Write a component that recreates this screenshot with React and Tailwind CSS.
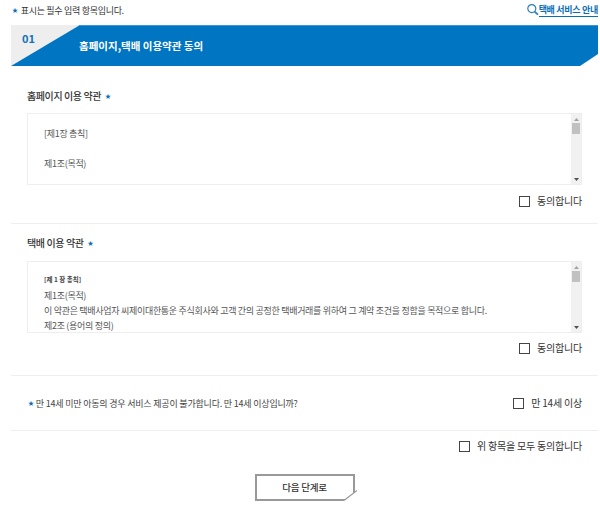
const FONT = "font-['Noto_Sans_CJK_KR','Noto_Sans',sans-serif]";

function Star() {
  return <span className="text-[#0b6fb5] text-[6px] leading-none">★</span>;
}

function Check({ label, className = "" }) {
  return (
    <div className={`flex h-4 items-center justify-end ${className}`}>
      <span className="h-[11px] w-[11px] border border-[#444] bg-white" />
      <span className="ml-[7px] text-[10px] leading-4 tracking-[-0.2px] text-[#333]">{label}</span>
    </div>
  );
}

function Scrollbar() {
  return (
    <div className="flex w-[10px] flex-col items-center bg-[#f1f1f1]">
      <svg className="mt-[4px] h-[3px] w-[5px]" viewBox="0 0 5 3"><path d="M2.5 0 5 3H0z" fill="#a3a3a3" /></svg>
      <div className="mt-[2px] h-[11px] w-[8px] bg-[#c1c1c1]" />
      <svg className="mb-[3px] mt-auto h-[3px] w-[5px]" viewBox="0 0 5 3"><path d="M2.5 3 5 0H0z" fill="#505050" /></svg>
    </div>
  );
}

function TermsBox({ children }) {
  return (
    <div className="mx-[16px] flex h-[72px] border border-[#eeeeee] bg-white">
      <div className="flex-1 overflow-hidden pl-[16px]">{children}</div>
      <Scrollbar />
    </div>
  );
}

const body = "text-[9px] tracking-[-0.3px] text-[#555]";
const heading = "ml-[16px] flex h-[14px] items-center gap-[4px] text-[10px] font-medium leading-none tracking-[-0.4px] text-[#333]";

export default function App() {
  return (
    <div className={`${FONT} h-[508px] w-[600px] overflow-hidden bg-white pl-[11px] pr-[2px] text-[#333]`}>
      <div className="flex h-[25px] items-center justify-between">
        <p className="mt-[-5px] flex items-center gap-[3px] pl-[1px] text-[9px] leading-none tracking-[-0.3px] text-[#333]">
          <Star />표시는 필수 입력 항목입니다.
        </p>
        <div className="mt-[-6px] flex items-center">
          <svg className="h-[11px] w-[12px]" viewBox="0 0 12 11" fill="none" stroke="#2a7fbd" strokeWidth="1.2">
            <circle cx="4.8" cy="4.6" r="4" />
            <path d="M7.6 7.6 11 10.6" strokeWidth="1.8" />
          </svg>
          <span className="border-b border-[#0b6fb5] text-[9px] font-bold leading-[13px] tracking-[-0.3px] text-[#0b6fb5]">택배 서비스 안내</span>
        </div>
      </div>

      <div className="relative h-[41px] bg-[#eeeeee] [clip-path:polygon(0_0,100%_0,100%_29px,calc(100%-18px)_100%,0_100%)]">
        <div className="flex h-full items-center border-t border-[#3a96d6] bg-[#0075c2] pl-[68px] [clip-path:polygon(69px_0,100%_0,100%_100%,0_100%)]">
          <h2 className="text-[10.5px] font-bold leading-none text-white">홈페이지,택배 이용약관 동의</h2>
        </div>
        <span className="absolute left-[11px] top-[8px] text-[11px] font-bold leading-none text-[#1273b5]">01</span>
      </div>

      <section className="border-b border-[#eeeeee] pb-[14px]">
        <h3 className={`${heading} mt-[23px]`}>
          홈페이지 이용 약관 <Star />
        </h3>
        <div className="mt-[10px]">
          <TermsBox>
            <p className={`mt-[13px] leading-[14px] ${body}`}>[제1장 총칙]</p>
            <p className={`mt-[16px] leading-[14px] ${body}`}>제1조(목적)</p>
          </TermsBox>
        </div>
        <Check label="동의합니다" className="mr-[16px] mt-[8px]" />
      </section>

      <section className="border-b border-[#eeeeee] pb-[19px]">
        <h3 className={`${heading} mt-[12px]`}>
          택배 이용 약관 <Star />
        </h3>
        <div className="mt-[11px]">
          <TermsBox>
            <p className="mt-[12px] text-[6.5px] font-bold leading-[10px] text-[#444]">[제 1 장 총칙]</p>
            <div className={`mt-[4px] leading-[15px] ${body}`}>
              <p>제1조(목적)</p>
              <p>이 약관은 택배사업자 씨제이대한통운 주식회사와 고객 간의 공정한 택배거래를 위하여 그 계약 조건을 정함을 목적으로 합니다.</p>
              <p>제2조 (용어의 정의)</p>
            </div>
          </TermsBox>
        </div>
        <Check label="동의합니다" className="mr-[16px] mt-[7px]" />
      </section>

      <section className="flex h-[55px] items-center justify-between border-b border-[#eeeeee] px-[16px]">
        <p className="flex items-center gap-[2px] pl-[1px] text-[9px] leading-none tracking-[-0.2px] text-[#444]">
          <Star />만 14세 미만 아동의 경우 서비스 제공이 불가합니다. 만 14세 이상입니까?
        </p>
        <Check label="만 14세 이상" />
      </section>

      <Check label="위 항목을 모두 동의합니다" className="mr-[16px] mt-[7px]" />

      <div className="mt-[20px] flex justify-center">
        <button className="relative flex h-[27px] w-[100px] items-center justify-center border-2 border-[#999] bg-white text-[9.5px] font-medium tracking-[-0.2px] text-[#333]">
          다음 단계로
          <svg className="absolute bottom-[-2px] right-[-4px] h-[11px] w-[13px]" viewBox="0 0 13 11">
            <path d="M13 0V11H0z" fill="#fff" />
            <path d="M13 .5 .5 10" stroke="#999" strokeWidth="1.2" fill="none" />
          </svg>
        </button>
      </div>
    </div>
  );
}
